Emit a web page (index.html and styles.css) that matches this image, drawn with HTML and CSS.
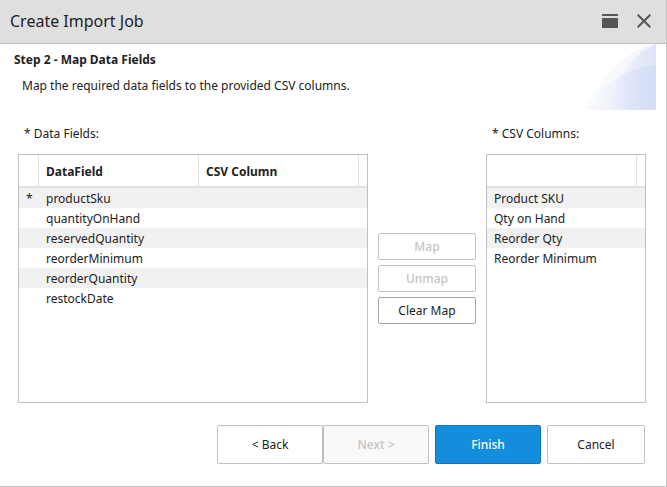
FILE: index.html
```html
<!DOCTYPE html>
<html lang="en">
<head>
<meta charset="utf-8">
<meta name="viewport" content="width=device-width, initial-scale=1">
<title>Create Import Job</title>
<link rel="stylesheet" href="styles.css">
</head>
<body>
<main class="dialog">
  <header class="titlebar">
    <h1 class="title">Create Import Job</h1>
    <button class="tool" type="button" aria-label="Maximize">
      <svg width="16" height="14" viewBox="0 0 16 14"><path fill="#555" d="M0 0h16v2H0zM0 4h16v10H0z"/></svg>
    </button>
    <button class="tool" type="button" aria-label="Close">
      <svg width="14" height="14" viewBox="0 0 14 14"><path d="M.7.7l12.6 12.6M13.3.7L.7 13.3" stroke="#555" stroke-width="2" fill="none"/></svg>
    </button>
  </header>

  <section class="intro">
    <div class="intro-text">
      <h2 class="step">Step 2 - Map Data Fields</h2>
      <p class="hint">Map the required data fields to the provided CSV columns.</p>
    </div>
    <svg class="art" width="73" height="66" viewBox="0 0 73 66" aria-hidden="true">
      <defs>
        <linearGradient id="sweep" gradientUnits="userSpaceOnUse" x1="0" y1="0" x2="73" y2="0">
          <stop offset="0" stop-color="#cfd9f5" stop-opacity="0"/>
          <stop offset=".4" stop-color="#cfd9f5" stop-opacity=".2"/>
          <stop offset="1" stop-color="#cfd9f5" stop-opacity=".7"/>
        </linearGradient>
        <linearGradient id="outer" gradientUnits="userSpaceOnUse" x1="0" y1="0" x2="73" y2="0">
          <stop offset="0" stop-color="#e6ebf8" stop-opacity=".1"/>
          <stop offset="1" stop-color="#e6ebf8" stop-opacity=".6"/>
        </linearGradient>
        <linearGradient id="inner" gradientUnits="userSpaceOnUse" x1="26" y1="0" x2="73" y2="0">
          <stop offset="0" stop-color="#cfd9f5" stop-opacity="0"/>
          <stop offset="1" stop-color="#cfd9f5" stop-opacity=".6"/>
        </linearGradient>
      </defs>
      <path fill="url(#outer)" d="M0 66C18 34 42 6 73 0V66z"/>
      <path fill="url(#inner)" d="M24 66C31 38 50 9 73 0V66z"/>
      <path fill="url(#sweep)" d="M0 66C18 43 44 23 73 21V66z"/>
    </svg>
  </section>

  <section class="mapper">
    <h3 class="label" id="fields-label">* Data Fields:</h3>
    <h3 class="label label-columns" id="columns-label">* CSV Columns:</h3>

    <div class="box box-fields">
      <table class="grid" aria-labelledby="fields-label">
        <colgroup><col class="col-mark"><col><col><col class="col-end"></colgroup>
        <thead><tr><th></th><th>DataField</th><th>CSV Column</th><th></th></tr></thead>
        <tbody>
          <tr><td class="mark">*</td><td>productSku</td><td></td><td></td></tr>
          <tr><td></td><td>quantityOnHand</td><td></td><td></td></tr>
          <tr><td></td><td>reservedQuantity</td><td></td><td></td></tr>
          <tr><td></td><td>reorderMinimum</td><td></td><td></td></tr>
          <tr><td></td><td>reorderQuantity</td><td></td><td></td></tr>
          <tr><td></td><td>restockDate</td><td></td><td></td></tr>
        </tbody>
      </table>
    </div>

    <div class="actions">
      <button class="btn btn-small" type="button" disabled>Map</button>
      <button class="btn btn-small" type="button" disabled>Unmap</button>
      <button class="btn btn-small btn-strong" type="button">Clear Map</button>
    </div>

    <div class="box box-columns">
      <table class="grid" aria-labelledby="columns-label">
        <colgroup><col><col class="col-end"></colgroup>
        <thead><tr><th></th><th></th></tr></thead>
        <tbody>
          <tr><td>Product SKU</td><td></td></tr>
          <tr><td>Qty on Hand</td><td></td></tr>
          <tr><td>Reorder Qty</td><td></td></tr>
          <tr><td>Reorder Minimum</td><td></td></tr>
        </tbody>
      </table>
    </div>
  </section>

  <footer class="footer">
    <div class="pager">
      <button class="btn" type="button">&lt; Back</button>
      <button class="btn btn-next" type="button" disabled>Next &gt;</button>
    </div>
    <button class="btn btn-primary" type="button">Finish</button>
    <button class="btn btn-cancel" type="button">Cancel</button>
  </footer>
</main>
</body>
</html>
```
FILE: styles.css
```css
* {
  box-sizing: border-box;
}

body {
  margin: 0;
  background: #fff;
  color: #222;
  font: 12px/20px "Noto Sans", "Open Sans", sans-serif;
}

h1, h2, h3, p {
  margin: 0;
}

button {
  font: inherit;
}

svg {
  display: block;
}

.dialog {
  display: flex;
  flex-direction: column;
  min-height: 100vh;
  border: solid #c0c0c0;
  border-width: 0 1px 1px 0;
}

.titlebar {
  display: flex;
  align-items: center;
  gap: 19px;
  height: 44px;
  padding: 0 15px 1px 10px;
  border-bottom: 1px solid #c0c0c0;
  background: #dfdfdf;
}

.title {
  flex: 1;
  font-size: 16px;
  font-weight: 400;
}

.tool {
  padding: 0;
  border: 0;
  background: none;
}

.intro {
  display: flex;
  justify-content: space-between;
  padding: 0 10px 0 14px;
}

.intro-text {
  padding-top: 6px;
}

.step {
  font-size: 12px;
  font-weight: 700;
}

.hint {
  padding: 6px 0 0 8px;
}

.mapper {
  flex: 1;
  display: grid;
  grid-template-columns: 350fr 98px 160fr;
  grid-template-rows: auto 1fr;
  gap: 10px;
  padding: 14px 20px 0 18px;
}

.label {
  padding-left: 6px;
  font-size: 12px;
  font-weight: 400;
}

.label-columns {
  grid-column: 3;
}

.box {
  border: 1px solid #c0c0c0;
}

.grid {
  width: 100%;
  table-layout: fixed;
  border-collapse: separate;
  border-spacing: 0;
  line-height: 18px;
}

.col-mark {
  width: 20px;
}

.col-end {
  width: 8px;
}

.grid th,
.grid td {
  padding: 2px 7px 0;
}

.grid th:last-child,
.grid td:last-child {
  padding: 0;
}

.grid th {
  height: 33px;
  border: solid #dfdfdf;
  border-width: 0 1px 2px 0;
  text-align: left;
}

.grid th:last-child {
  border-right: 0;
}

.grid td {
  height: 20px;
}

.grid tbody tr:nth-child(odd) {
  background: #f1f1f1;
}

.actions {
  display: flex;
  flex-direction: column;
  justify-content: center;
  gap: 5px;
}

.btn {
  width: 106px;
  height: 39px;
  padding: 0;
  border: 1px solid #c0c0c0;
  border-radius: 2px;
  background: #fff;
  color: #222;
}

.btn:disabled {
  color: #c4c4c4;
  font-weight: 500;
}

.btn-small {
  width: auto;
  height: 27px;
}

.btn-strong {
  border-color: #a6a6a6;
}

.btn-next {
  background: #f9f9f9;
}

.btn-primary {
  border-color: #0b76c4;
  background: #158ddd;
  color: #fff;
  font-weight: 500;
}

.btn-cancel {
  width: 98px;
}

.footer {
  display: flex;
  justify-content: flex-end;
  gap: 6px;
  padding: 22px 21px;
}

.pager {
  display: flex;
}
```
